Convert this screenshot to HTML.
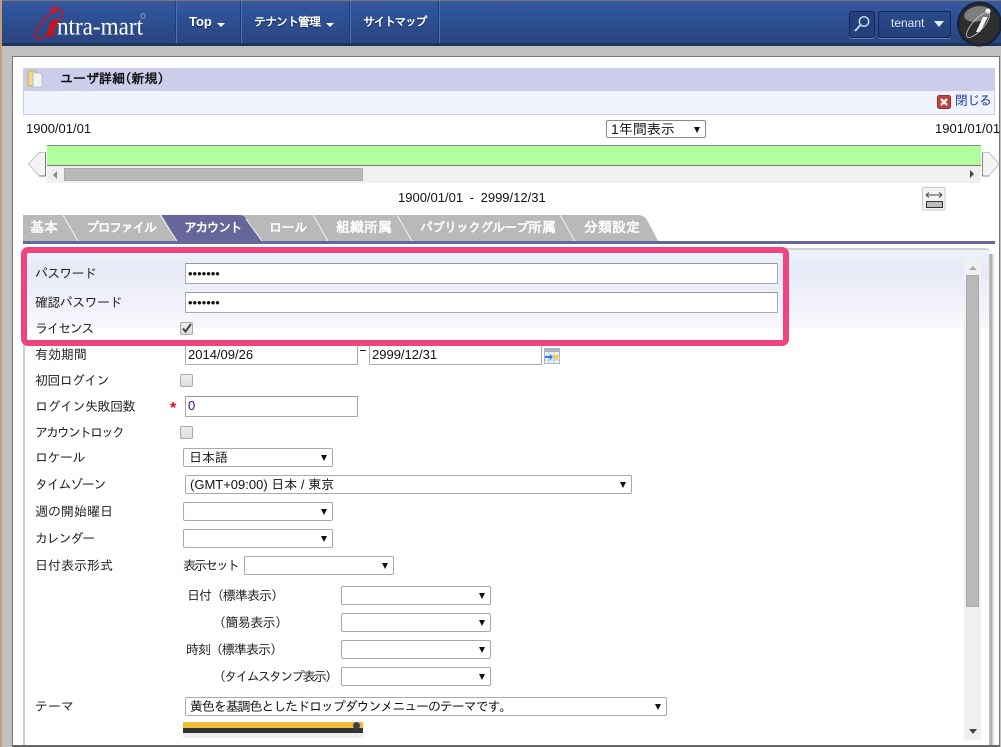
<!DOCTYPE html>
<html lang="ja"><head><meta charset="utf-8"><title>ユーザ詳細</title>
<style>
html,body{margin:0;padding:0;background:#fff}
#p{position:relative;width:1001px;height:747px;overflow:hidden;background:#c0c0c0;font-family:"IPAGothic","Noto Sans CJK JP",sans-serif;font-size:13px;color:#222}
#p div,#p span.t{position:absolute;white-space:nowrap;box-sizing:border-box}
.t{line-height:16px}
.nav{color:#fff;font-weight:bold;font-size:12px;line-height:16px;text-shadow:0 1px 1px #123}
.sep{top:1px;width:2px;height:42px;background:linear-gradient(90deg,#1f3a70 50%,#4f74bb 50%)}
.tab{top:215px;height:26px;color:#fff;font-weight:bold;font-size:14px;line-height:25px}
.tab b{font-size:13px;letter-spacing:-1px}
.in{background:#fff;border:1px solid #aaa;border-top-color:#999;font-family:"Liberation Sans","IPAGothic",sans-serif;font-size:13px;line-height:18px;padding-left:2px;color:#111}
.sel{background:#fff;border:1px solid #aaa;border-radius:2px;height:19px;font-family:"Liberation Sans","IPAGothic",sans-serif;font-size:13px;line-height:17px;padding-left:5px;color:#111}
.sel:after{content:"";position:absolute;right:5px;top:6px;border:3px solid transparent;border-top:6px solid #111;border-bottom:0}
.cb{width:13px;height:13px;background:linear-gradient(#eee,#ddd);border:1px solid #aaa;border-radius:2px}
</style></head><body><div id="p">

<!-- header -->
<div style="left:0;top:0;width:1001px;height:46px;background:linear-gradient(#37589f,#2e5096 40%,#2a4680 94%);border-top:1px solid #777;border-bottom:3px solid #1f3560"></div>
<div style="left:0;top:0;width:2px;height:747px;background:linear-gradient(90deg,#b9a38c,#c49a72)"></div>
<svg style="position:absolute;left:30px;top:5px" width="125" height="36" viewBox="0 0 125 36">
<ellipse cx="19" cy="19" rx="19" ry="6.500" transform="rotate(-47 19 19)" fill="none" stroke="#c8141e" stroke-width="1.500"/>
<path d="M21 15 L28 14 L23 29 L26 27.500 L26 29 L20 32 L16 31 Z" fill="#c8141e"/>
<circle cx="24" cy="5" r="3.200" fill="#d9141e"/>
<text x="27" y="29.500" font-family="Liberation Serif" font-size="25" fill="#fff" textLength="86" lengthAdjust="spacingAndGlyphs">ntra-mart</text>
<circle cx="113" cy="11" r="2.200" fill="none" stroke="#aab" stroke-width=".8"/>
</svg>
<div class="sep" style="left:175px"></div><div class="sep" style="left:240px"></div><div class="sep" style="left:349px"></div><div class="sep" style="left:438px"></div>
<div class="nav" style="left:189px;top:14px;font-family:'Liberation Sans',sans-serif;font-size:13px">Top</div>
<div style="left:217px;top:23px;border:4px solid transparent;border-top:4px solid #fff;border-bottom:0"></div>
<div class="nav" style="left:254px;top:14px;letter-spacing:-1px">テナント管理</div>
<div style="left:326px;top:23px;border:4px solid transparent;border-top:4px solid #fff;border-bottom:0"></div>
<div class="nav" style="left:363px;top:14px;letter-spacing:-1.500px">サイトマップ</div>
<div style="left:849px;top:11px;width:26px;height:27px;background:#23407c;border:1px solid #15284f;border-radius:3px;box-shadow:0 1px 0 #5f7fbd"></div>
<svg style="position:absolute;left:853px;top:14px" width="18" height="20" viewBox="0 0 18 20"><circle cx="11" cy="7.500" r="4.700" fill="none" stroke="#c5d3e8" stroke-width="1.500"/><path d="M7.500 11 L2 17" stroke="#c5d3e8" stroke-width="2"/></svg>
<div style="left:878px;top:11px;width:73px;height:27px;background:linear-gradient(#2b4a8a,#23407c);border:1px solid #15284f;border-radius:2px;box-shadow:0 1px 0 #5f7fbd"></div>
<div style="left:891px;top:15px;font:12px/17px 'Liberation Sans',sans-serif;color:#dbe8f5">tenant</div>
<div style="left:934px;top:21px;border:5px solid transparent;border-top:6px solid #e6edf6;border-bottom:0"></div>
<svg style="position:absolute;left:956px;top:1px" width="45" height="46" viewBox="0 0 45 46">
<circle cx="23.500" cy="23" r="22.500" fill="#16233f"/><circle cx="23.500" cy="23" r="20" fill="#2e2e2e"/>
<ellipse cx="21" cy="13" rx="13" ry="7.500" fill="#7e7e7e" transform="rotate(-12 21 13)"/>
<circle cx="32" cy="10" r="2.600" fill="#eee"/>
<path d="M27 16 L32 16 L24 31 L20 31 Z" fill="#f4f4f4"/>
<ellipse cx="22" cy="24" rx="16" ry="5.500" transform="rotate(-48 22 24)" fill="none" stroke="#ccc" stroke-width=".8"/>
</svg>

<!-- main container -->
<div style="left:12px;top:56px;width:988px;height:691px;background:#fff;border:1px solid #777;border-bottom:2px solid #666"></div>
<div style="left:23px;top:68px;width:972px;height:23px;background:#cbcdeb"></div>
<div style="left:23px;top:91px;width:972px;height:24px;background:#f0f2fe;border:1px solid #c9cff3;border-top:0"></div>
<svg style="position:absolute;left:27px;top:70px" width="17" height="18" viewBox="0 0 17 18"><rect x="1" y="1" width="8" height="15" fill="#f0d98e" stroke="#c9ad62"/><path d="M6 3h7l2 2v12H6z" fill="#f3f5f6" stroke="#b9c0c4"/></svg>
<div class="t" style="left:60px;top:71px;font-weight:bold;font-size:13px;color:#111">ユーザ詳細(新規)</div>
<svg style="position:absolute;left:937px;top:95px" width="14" height="14" viewBox="0 0 14 14"><rect x=".5" y=".5" width="13" height="13" rx="2" fill="#c4443f" stroke="#96302c"/><path d="M4 4 L10 10 M10 4 L4 10" stroke="#fff" stroke-width="2.200"/></svg>
<div class="t" style="left:955px;top:93px;color:#1a3fa0;font-size:13px;letter-spacing:-1px">閉じる</div>

<!-- timeline -->
<div class="t" style="left:26px;top:121px;font:13px/16px 'Liberation Sans',sans-serif;color:#111">1900/01/01</div>
<div class="t" style="left:935px;top:121px;font:13px/16px 'Liberation Sans',sans-serif;color:#111">1901/01/01</div>
<div class="sel" style="left:606px;top:120px;width:100px;height:18px;border-color:#888;line-height:16px;font-size:14px;padding-left:4px">1年間表示</div>
<div style="left:47px;top:145px;width:934px;height:21px;background:#b0ff9f;border-top:1px solid #888;border-bottom:1px solid #777"></div>
<div style="left:47px;top:166px;width:934px;height:17px;background:#f0f0f0"></div>
<div style="left:64px;top:168px;width:299px;height:13px;background:#b9b9b9;border:1px solid #aaa"></div>
<div style="left:53px;top:171px;border:4px solid transparent;border-right:4px solid #888;border-left:0"></div>
<div style="left:970px;top:170px;border:4px solid transparent;border-left:4px solid #444;border-right:0"></div>
<svg style="position:absolute;left:27px;top:151px" width="20" height="26" viewBox="0 0 20 26"><path d="M1.500 13 L12 1.500 H18.500 V25 H12 Z" fill="#f4f4f4" stroke="#c4c4c4"/><path d="M12 25 H18.500 V1.500" fill="none" stroke="#777"/></svg>
<svg style="position:absolute;left:981px;top:151px" width="20" height="26" viewBox="0 0 20 26"><path d="M18 13 L8 1.500 H1.500 V25 H8 Z" fill="#f4f4f4" stroke="#c4c4c4"/><path d="M1.500 1.500 V25 H8" fill="none" stroke="#888"/></svg>
<div class="t" style="left:398px;top:190px;font:13px/16px 'Liberation Sans',sans-serif;color:#111;word-spacing:3px">1900/01/01 - 2999/12/31</div>
<svg style="position:absolute;left:922px;top:187px" width="24" height="24" viewBox="0 0 24 24"><rect x=".5" y=".5" width="22.500" height="22.500" rx="1" fill="#f3f3f3" stroke="#ccc"/><path d="M4 8 H20 M4 8 L7 5.500 M4 8 L7 10.500 M20 8 L17 5.500 M20 8 L17 10.500" stroke="#444" fill="none"/><rect x="4.500" y="14.500" width="16" height="6" fill="#bbb" stroke="#333"/></svg>

<!-- tabs -->
<svg style="position:absolute;left:23px;top:215px" width="640" height="26" viewBox="0 0 640 26">
<path d="M0 0 H615 Q621 0 624 5 L635 26 H0 Z" fill="#b9b9b9"/>
<path d="M139 0 H216 Q221 0 223 4 L239 26 H154 L141 4 Q139 1 139 0Z" fill="#66669a"/>
<g fill="none" stroke="#f2f2f2"><path d="M40 0 L55 26M137 0 L154 26M223 4 L239 26M290 0 L305 26M374 0 L389 26M537 0 L552 26"/></g>
</svg>
<div class="tab" style="left:30px">基本</div>
<div class="tab" style="left:86px"><b style="letter-spacing:-1.400px">プロファイル</b></div>
<div class="tab" style="left:184px"><b style="letter-spacing:-1.600px">アカウント</b></div>
<div class="tab" style="left:269px"><b style="letter-spacing:-.3px">ロール</b></div>
<div class="tab" style="left:336px">組織所属</div>
<div class="tab" style="left:420px"><b>パブリックグループ</b>所属</div>
<div class="tab" style="left:584px">分類設定</div>
<div style="left:23px;top:241px;width:972px;height:3px;background:#66669a"></div>

<!-- panel -->
<div style="left:23px;top:248px;width:968px;height:497px;background:#fff;border:2px solid #cfcfcf;border-bottom:0;border-radius:6px 6px 0 0;border-right:0"></div>
<div style="left:25px;top:250px;width:964px;height:78px;background:linear-gradient(#edf1fa,#eaeef9 14%,#e6e9f6 22%,#f8f8fd);border-radius:5px 5px 0 0"></div>
<div style="left:989px;top:254px;width:6px;height:491px;background:linear-gradient(90deg,#c4c4c4,#aaa 40%,#e8e8e8 70%,#f4f4f4)"></div>
<div style="left:964px;top:258px;width:17px;height:482px;background:#f0f0f0"></div>
<div style="left:966px;top:275px;width:13px;height:332px;background:#b9b9b9;border:1px solid #a8a8a8"></div>
<div style="left:969px;top:266px;border:4px solid transparent;border-bottom:4px solid #aaa;border-top:0"></div>
<div style="left:969px;top:729px;border:4px solid transparent;border-top:5px solid #444;border-bottom:0"></div>

<!-- form -->
<div class="t" style="left:35px;top:266px;letter-spacing:-.8px">パスワード</div>
<div class="in" style="left:185px;top:263px;width:593px;height:21px;line-height:19px">•••••••</div>
<div class="t" style="left:35px;top:295px;letter-spacing:-.6px">確認パスワード</div>
<div class="in" style="left:185px;top:292px;width:593px;height:21px;line-height:19px">•••••••</div>
<div class="t" style="left:35px;top:321px;letter-spacing:-1.400px">ライセンス</div>
<div class="cb" style="left:180px;top:322px"></div>
<svg style="position:absolute;left:181px;top:322px" width="12" height="12" viewBox="0 0 12 12"><path d="M2 6.500 L4.500 9.500 L10 2" fill="none" stroke="#444" stroke-width="2"/></svg>
<div class="t" style="left:35px;top:347px">有効期間</div>
<div class="in" style="left:185px;top:340px;width:173px;height:25px;padding-top:5px">2014/09/26</div>
<div class="in" style="left:369px;top:340px;width:173px;height:25px;padding-top:5px">2999/12/31</div>
<div style="left:360px;top:350px;width:6px;height:1px;background:#222"></div>
<svg style="position:absolute;left:544px;top:348px" width="16" height="16" viewBox="0 0 16 16"><rect x=".5" y=".5" width="15" height="15" fill="#eef2f6" stroke="#aab4c2"/><rect x="1" y="1" width="14" height="3" fill="#a9b6c6"/><path d="M5 4V15M10 4V15M1 8H15M1 12H15" stroke="#bcc6d2"/><path d="M1 8 H6 V6 L9 9 L6 12 V10 H1Z" fill="#2a7fe0"/><rect x="10" y="7" width="4" height="4" fill="#ffcc33"/></svg>
<div class="t" style="left:35px;top:373px;letter-spacing:-.7px">初回ログイン</div>
<div class="cb" style="left:180px;top:374px"></div>
<div class="t" style="left:35px;top:399px;letter-spacing:-.5px">ログイン失敗回数</div>
<div class="t" style="left:170px;top:401px;color:#e8002a;font:bold 16px/16px 'Liberation Sans',sans-serif">*</div>
<div class="in" style="left:185px;top:396px;width:173px;height:21px;color:#40008a">0</div>
<div class="t" style="left:35px;top:425px;letter-spacing:-2px">アカウントロック</div>
<div class="cb" style="left:180px;top:426px"></div>
<div class="t" style="left:35px;top:450px;letter-spacing:-.5px">ロケール</div>
<div class="sel" style="left:183px;top:448px;width:150px">日本語</div>
<div class="t" style="left:35px;top:477px;letter-spacing:-1.300px">タイムゾーン</div>
<div class="sel" style="left:185px;top:475px;width:447px;padding-left:4px">(GMT+09:00) 日本 / 東京</div>
<div class="t" style="left:35px;top:504px">週の開始曜日</div>
<div class="sel" style="left:183px;top:502px;width:150px"></div>
<div class="t" style="left:35px;top:531px;letter-spacing:-1.200px">カレンダー</div>
<div class="sel" style="left:183px;top:529px;width:150px"></div>
<div class="t" style="left:35px;top:558px">日付表示形式</div>
<div class="t" style="left:183px;top:558px;letter-spacing:-2px">表示セット</div>
<div class="sel" style="left:244px;top:556px;width:150px"></div>
<div class="t" style="left:187px;top:588px;letter-spacing:-1px">日付（標準表示）</div>
<div class="sel" style="left:341px;top:586px;width:150px"></div>
<div class="t" style="left:213px;top:615px;letter-spacing:-.6px">（簡易表示）</div>
<div class="sel" style="left:341px;top:613px;width:150px"></div>
<div class="t" style="left:186px;top:642px;letter-spacing:-1px">時刻（標準表示）</div>
<div class="sel" style="left:341px;top:640px;width:150px"></div>
<div class="t" style="left:213px;top:669px;letter-spacing:-1.800px">（タイムスタンプ表示）</div>
<div class="sel" style="left:341px;top:667px;width:150px"></div>
<div class="t" style="left:35px;top:699px">テーマ</div>
<div class="sel" style="left:185px;top:697px;width:482px;padding-left:4px;letter-spacing:-1.100px">黄色を基調色としたドロップダウンメニューのテーマです。</div>
<div style="left:183px;top:722px;width:180px;height:16px;background:linear-gradient(#f0bc3c 0,#f0bc3c 6px,#333 6px,#333 11px,#eee 11px)"></div>
<div style="left:353px;top:722px;width:7px;height:7px;border-radius:50%;background:#444"></div>

<!-- highlight -->
<div style="left:21px;top:247px;width:768px;height:99px;border:6px solid #ee4480;border-radius:7px"></div>
</div></body></html>
